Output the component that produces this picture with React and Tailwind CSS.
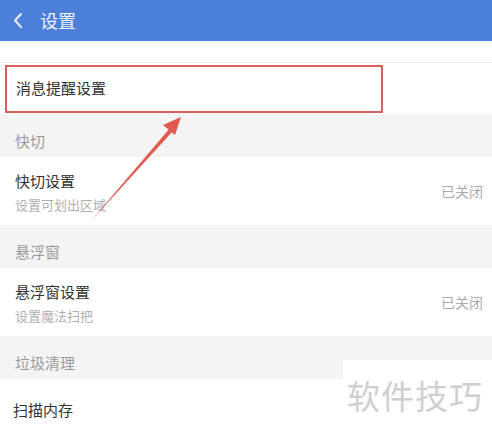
const font = { fontFamily: '"Noto Sans CJK SC", "Noto Sans", sans-serif' };

function Section({ title }) {
  return (
    <div className="h-[43px] bg-[#f4f4f4] flex items-end pb-[6px] px-[15px] text-[15px] leading-[20px] text-[#9a9a9a]">
      {title}
    </div>
  );
}

function Item({ title, sub, value }) {
  return (
    <div className="h-[68px] bg-white flex items-start justify-between pl-[15px] pr-[9px] pt-[14px]">
      <div className="flex flex-col gap-[5px]">
        <span className="text-[15px] leading-[20px] text-[#333]">{title}</span>
        <span className="text-[13px] leading-[18px] text-[#b0b0b0]">{sub}</span>
      </div>
      <span className="text-[14px] leading-[20px] text-[#aaa] mt-[10px]">{value}</span>
    </div>
  );
}

export default function App() {
  return (
    <div className="relative w-[492px] h-[433px] overflow-hidden bg-[#f4f4f4]" style={font}>
      <div className="h-[41px] bg-[#4c7fd7] flex items-center gap-[17px] pl-[13px]">
        <svg width="10" height="17" viewBox="0 0 10 17" fill="none">
          <path d="M8 2L2 8.5l6 6.5" stroke="#e6eefb" strokeWidth="2" strokeLinecap="round" strokeLinejoin="round" />
        </svg>
        <span className="text-[18px] text-[#eef3fc]">设置</span>
      </div>
      <div className="h-[22px] bg-white border-b border-[#eeeeee]" />
      <div className="h-[51px] bg-white flex items-center px-[5px]">
        <div className="w-[378px] h-[48px] border-2 border-[#d5605c] flex items-center pl-[9px] text-[15px] text-[#333]">
          消息提醒设置
        </div>
      </div>
      <Section title="快切" />
      <Item title="快切设置" sub="设置可划出区域" value="已关闭" />
      <Section title="悬浮窗" />
      <Item title="悬浮窗设置" sub="设置魔法扫把" value="已关闭" />
      <Section title="垃圾清理" />
      <div className="h-[62px] bg-white flex items-center px-[13px] text-[15px] text-[#333]">
        扫描内存
      </div>

      <svg className="absolute left-0 top-0" width="492" height="433" viewBox="0 0 492 433">
        <path d="M90 222 L170 128 L173 131 Z" fill="#e05a52" />
        <path d="M181 117 L163 125 L175 135 Z" fill="#e05a52" />
      </svg>

      <div className="absolute left-[343px] top-[360px] w-[149px] h-[73px] bg-white flex items-start pt-[15px] pl-[4px]">
        <span className="text-[33px] leading-[40px] tracking-[1px] text-[#cfcfcf]">软件技巧</span>
      </div>
    </div>
  );
}
